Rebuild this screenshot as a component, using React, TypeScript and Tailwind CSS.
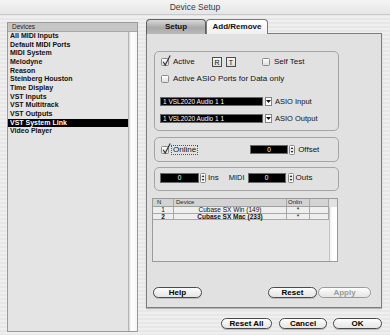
import React from "react";

function CheckBox({ checked }: { checked?: boolean }) {
  return (
    <div className="relative w-[8px] h-[8px] shrink-0 rounded-[1.5px] border border-[#8a8a8a] bg-[linear-gradient(180deg,#ffffff,#dedede)]">
      {checked && (
        <svg className="absolute left-[0px] top-[-4px] w-[9px] h-[11px]" viewBox="0 0 9 11" fill="none">
          <path d="M1.2 6.8 L3.2 10 L8.2 0.6" stroke="#2a2a2a" strokeWidth="1.1" />
        </svg>
      )}
    </div>
  );
}

function Spinner() {
  return (
    <div className="w-[6px] h-[10px] shrink-0 rounded-[1.5px] border border-[#858585] bg-white">
      <svg className="w-full h-full block" viewBox="0 0 4 8">
        <path d="M0.6 3 L2 1.1 L3.4 3 Z" fill="#222" />
        <path d="M0 4 L4 4" stroke="#999" strokeWidth="0.5" />
        <path d="M0.6 5 L2 6.9 L3.4 5 Z" fill="#222" />
      </svg>
    </div>
  );
}

function Arrow() {
  return (
    <div className="w-[7px] h-[9px] shrink-0 border border-[#858585] bg-white flex items-center justify-center">
      <svg className="w-[5px] h-[3px] block" viewBox="0 0 5 3">
        <path d="M0 0 L5 0 L2.5 3 Z" fill="#111" />
      </svg>
    </div>
  );
}

function Pill({ label, className }: { label: string; className: string }) {
  return (
    <div
      className={
        "h-[11px] rounded-full border border-[#4a4a4a] bg-[linear-gradient(180deg,#ffffff,#f0f0f0_50%,#e6e6e6)] flex items-center justify-center text-[8px] font-bold leading-none text-black shadow-[0_1px_0_#bdbdbd] " +
        className
      }
    >
      {label}
    </div>
  );
}

const items = [
  "All MIDI Inputs",
  "Default MIDI Ports",
  "MIDI System",
  "Melodyne",
  "Reason",
  "Steinberg Houston",
  "Time Display",
  "VST Inputs",
  "VST Multitrack",
  "VST Outputs",
  "VST System Link",
  "Video Player",
];

export default function App() {
  return (
    <div className="w-[390px] h-[335px] overflow-hidden flex flex-col [font-family:'Liberation_Sans',Arial,sans-serif] text-[#111] bg-[repeating-linear-gradient(180deg,#efefef_0px,#efefef_2px,#e7e7e7_2px,#e7e7e7_4px)]">
      {/* title bar */}
      <div className="h-[15px] shrink-0 flex items-center justify-center text-[8.5px] text-[#3a3a3a] border-b border-[#c9c9c9] bg-[linear-gradient(180deg,#f4f4f4,#e6e6e6)]">
        Device Setup
      </div>

      <div className="flex flex-1">
        {/* device list */}
        <div className="ml-[7px] mt-[7px] w-[131px] h-[310px] border border-[#9a9a9a] bg-[#e4e4e4] flex flex-col">
          <div className="h-[9px] shrink-0 bg-[#c6c6c6] border-b border-[#a9a9a9] text-[6.5px] leading-[8px] pl-[4px] text-[#222]">
            Devices
          </div>
          <div className="flex flex-1">
            <div className="flex-1 flex flex-col">
              {items.map((it) => (
                <div
                  key={it}
                  className={
                    it === "VST System Link"
                      ? "h-[8.67px] leading-[8.67px] text-[7px] font-bold pl-[2px] bg-black text-white"
                      : "h-[8.67px] leading-[8.67px] text-[7px] font-bold pl-[2px] text-[#111]"
                  }
                >
                  {it}
                </div>
              ))}
            </div>
            <div className="w-[9px] border-l border-[#b3b3b3] bg-[linear-gradient(90deg,#d6d6d6,#ffffff_30%,#f6f6f6)]" />
          </div>
        </div>

        {/* right side */}
        <div className="ml-[8px] mt-[4px] w-[236px] flex flex-col">
          <div className="flex h-[15px] relative z-10">
            <div className="w-[60px] h-[15px] rounded-t-[4px] border border-b-0 border-[#5e5e5e] bg-[linear-gradient(180deg,#d8d8d8,#a9a9a9_55%,#b9b9b9)] flex items-center justify-center text-[8px] font-bold">
              Setup
            </div>
            <div className="w-[62px] h-[15px] rounded-t-[4px] border border-b-0 border-[#7a7a7a] bg-[linear-gradient(180deg,#ffffff,#f0f0f0)] flex items-center justify-center text-[8px] font-bold">
              Add/Remove
            </div>
          </div>
          <div className="-mt-[1px] w-[236px] h-[275px] border border-[#7d7d7d] bg-[#e1e1e1] shadow-[0_1px_1px_#b5b5b5] flex flex-col pl-[7px] pt-[17px]">
            {/* group 1 */}
            <div className="w-[185px] h-[80px] rounded-[5px] border border-[#a5a5a5] flex flex-col pl-[6px] pt-[5px]">
              <div className="flex items-center h-[10px]">
                <div className="flex items-center w-[51px]">
                  <CheckBox checked />
                  <span className="ml-[4px] text-[8px] leading-none">Active</span>
                </div>
                <div className="w-[10px] h-[10px] border border-[#4d4d4d] bg-[linear-gradient(180deg,#f6f6f6,#dcdcdc)] flex items-center justify-center text-[7px] leading-none">R</div>
                <div className="ml-[4px] w-[10px] h-[10px] border border-[#4d4d4d] bg-[linear-gradient(180deg,#f6f6f6,#dcdcdc)] flex items-center justify-center text-[7px] leading-none">T</div>
                <div className="ml-[26px] flex items-center">
                  <CheckBox />
                  <span className="ml-[4px] text-[8px] leading-none">Self Test</span>
                </div>
              </div>
              <div className="flex items-center h-[9px] mt-[7px]">
                <CheckBox />
                <span className="ml-[4px] text-[8px] leading-none">Active ASIO Ports for Data only</span>
              </div>
              <div className="flex items-center h-[9px] mt-[14px] -ml-[1px]">
                <div className="w-[103px] h-[9px] bg-black border border-[#6a6a6a] text-white text-[6.5px] leading-[7px] pl-[2px]">1 VSL2020 Audio 1 1</div>
                <div className="ml-[2px]"><Arrow /></div>
                <span className="ml-[3px] text-[7.5px] leading-none">ASIO Input</span>
              </div>
              <div className="flex items-center h-[9px] mt-[8px] -ml-[1px]">
                <div className="w-[103px] h-[9px] bg-black border border-[#6a6a6a] text-white text-[6.5px] leading-[7px] pl-[2px]">1 VSL2020 Audio 1 1</div>
                <div className="ml-[2px]"><Arrow /></div>
                <span className="ml-[3px] text-[7.5px] leading-none">ASIO Output</span>
              </div>
            </div>

            {/* group 2 */}
            <div className="mt-[6px] w-[185px] h-[25px] rounded-[5px] border border-[#a5a5a5] flex items-center pl-[6px]">
              <CheckBox checked />
              <span className="ml-[3px] px-[1px] text-[8px] leading-[8px] outline outline-1 outline-dotted outline-[#555]">Online</span>
              <div className="ml-[53px] w-[38px] h-[9px] bg-black border border-[#6a6a6a] text-white text-[6.5px] leading-[7px] text-center">0</div>
              <div className="ml-[1px]"><Spinner /></div>
              <span className="ml-[3px] text-[8px] leading-none">Offset</span>
            </div>

            {/* group 3 */}
            <div className="mt-[5px] w-[185px] h-[24px] rounded-[5px] border border-[#a5a5a5] flex items-center pl-[5px] pb-[2px]">
              <div className="w-[39px] h-[10px] bg-black border border-[#6a6a6a] text-white text-[6.5px] leading-[8px] text-center">0</div>
              <div className="ml-[1px]"><Spinner /></div>
              <span className="ml-[2px] text-[8px] leading-none">Ins</span>
              <span className="ml-[10px] text-[7.5px] leading-none">MIDI</span>
              <div className="ml-[3px] w-[38px] h-[10px] bg-black border border-[#6a6a6a] text-white text-[6.5px] leading-[8px] text-center">0</div>
              <div className="ml-[2px]"><Spinner /></div>
              <span className="ml-[2px] text-[8px] leading-none">Outs</span>
            </div>

            {/* table */}
            <div className="mt-[7px] -ml-[2px] w-[186px] h-[64px] border border-[#9a9a9a] flex">
              <div className="w-[176px] flex flex-col bg-[#e6e6e6]">
                <div className="flex h-[8px] bg-[#d3d3d3] border-b border-[#a0a0a0] text-[6px] leading-[7px] text-[#222]">
                  <div className="w-[21px] border-r border-[#a8a8a8] pl-[4px]">N</div>
                  <div className="w-[113px] border-r border-[#a8a8a8] pl-[2px]">Device</div>
                  <div className="w-[23px] border-r border-[#a8a8a8] pl-[1px]">Onlin</div>
                  <div className="flex-1 border-r border-[#a8a8a8]" />
                </div>
                <div className="flex h-[6.5px] bg-[#eeeeee] border-b border-[#a8a8a8] text-[6.5px] leading-[6px]">
                  <div className="w-[21px] border-r border-[#a8a8a8] text-center">1</div>
                  <div className="w-[113px] border-r border-[#a8a8a8] text-center">Cubase SX Win (149)</div>
                  <div className="w-[23px] border-r border-[#a8a8a8] text-center">*</div>
                  <div className="flex-1 border-r border-[#a8a8a8]" />
                </div>
                <div className="flex h-[6.5px] bg-[#eeeeee] border-b border-[#a8a8a8] text-[6.5px] leading-[6px] font-bold">
                  <div className="w-[21px] border-r border-[#a8a8a8] text-center">2</div>
                  <div className="w-[113px] border-r border-[#a8a8a8] text-center">Cubase SX Mac (233)</div>
                  <div className="w-[23px] border-r border-[#a8a8a8] text-center font-normal">*</div>
                  <div className="flex-1 border-r border-[#a8a8a8]" />
                </div>
              </div>
              <div className="flex-1 flex flex-col">
                <div className="h-[8px] bg-[#e1e1e1]" />
                <div className="flex-1 border-l border-[#c4c4c4] bg-[linear-gradient(90deg,#f2f2f2,#ffffff_40%,#ffffff)]" />
              </div>
            </div>

            <div className="flex-1" />
            {/* panel buttons */}
            <div className="flex items-center h-[11px] mb-[9px] -ml-[1px]">
              <Pill label="Help" className="w-[49px]" />
              <div className="flex-1" />
              <Pill label="Reset" className="w-[49px]" />
              <Pill label="Apply" className="ml-[1px] w-[53px] mr-[10px] !border-[#9a9a9a] !text-[#9a9a9a] !shadow-none" />
            </div>
          </div>

          {/* dialog buttons */}
          <div className="flex items-center mt-[10px] h-[11px] pl-[75px]">
            <Pill label="Reset All" className="w-[51px]" />
            <Pill label="Cancel" className="ml-[7px] w-[48px]" />
            <Pill label="OK" className="ml-[6px] w-[49px]" />
          </div>
        </div>
      </div>
    </div>
  );
}
